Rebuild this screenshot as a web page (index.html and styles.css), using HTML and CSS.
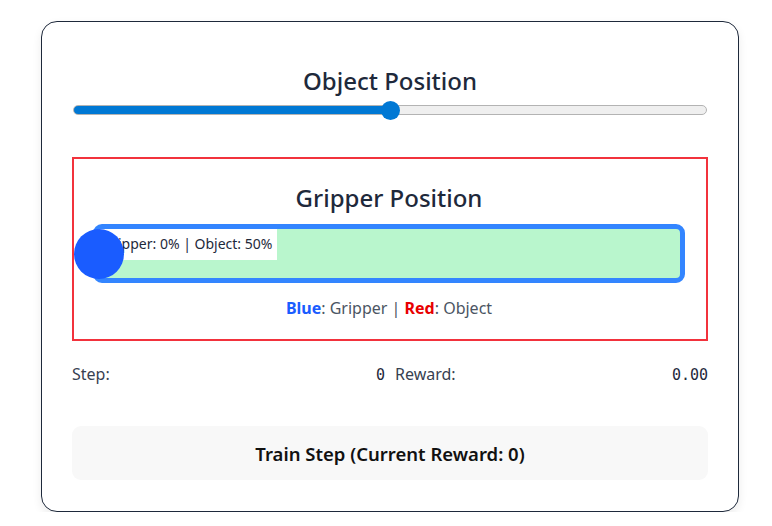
FILE: index.html
```html
<!DOCTYPE html>
<html lang="en">
<head>
<meta charset="utf-8">
<title>Gripper Trainer</title>
<link rel="stylesheet" href="styles.css">
</head>
<body>
  <div class="card">
    <section class="object-section">
      <h2 class="title">Object Position</h2>
      <input class="slider" type="range" min="0" max="100" value="50">
    </section>

    <section class="viz">
      <h2 class="title">Gripper Position</h2>
      <div class="bar">
        <div class="bar-label">Gripper: 0% | Object: 50%</div>
        <div class="gripper" style="left: 0%"></div>
      </div>
      <p class="legend"><b class="blue">Blue</b>: Gripper | <b class="red">Red</b>: Object</p>
    </section>

    <div class="stats">
      <div class="stat"><span class="stat-label">Step:</span><span class="stat-value">0</span></div>
      <div class="stat"><span class="stat-label">Reward:</span><span class="stat-value">0.00</span></div>
    </div>

    <button class="train">Train Step (Current Reward: 0)</button>
  </div>
</body>
</html>
```

FILE: styles.css
```css
* { box-sizing: border-box; }

html, body { background: #ffffff; }

body {
  margin: 0;
  padding: 21px 0 0 41px;
  font-family: "Noto Sans", "Open Sans", sans-serif;
  color: #1e293b;
}

.card {
  width: 698px;
  border: 1px solid #1e293b;
  border-radius: 16px;
  padding: 43px 30px 31px;
  box-shadow: 0 4px 10px rgba(0, 0, 0, 0.08);
  background: #fff;
}

.title {
  margin: 0;
  text-align: center;
  font-size: 24px;
  font-weight: 500;
  line-height: 32px;
  color: #1e293b;
}

.object-section .title { margin-bottom: 3px; }

.slider {
  -webkit-appearance: none;
  appearance: none;
  display: block;
  width: 634px;
  margin: 0 1px;
  height: 20px;
  background: transparent;
}
.slider::-webkit-slider-runnable-track {
  height: 10px;
  border-radius: 5px;
  border: 1px solid #b3b3b3;
  background: linear-gradient(to right, #0078d4 0 50%, #efefef 50% 100%);
}
.slider::-webkit-slider-thumb {
  -webkit-appearance: none;
  appearance: none;
  width: 19px;
  height: 19px;
  border-radius: 50%;
  background: #0078d4;
  margin-top: -5.5px;
  border: none;
}

.viz {
  margin-top: 37px;
  border: 2px solid #f2323c;
  padding: 23px 21px 19px 19px;
}

.viz .title { margin-bottom: 10px; }

.bar {
  position: relative;
  height: 59px;
  border: 5px solid #3385ff;
  border-radius: 9px;
  background: #b9f6cd;
}

.bar-label {
  position: absolute;
  top: 0;
  left: 0;
  background: #fff;
  padding: 4px 5px 5px 4px;
  font-size: 14px;
  line-height: 22px;
  color: #1e293b;
}

.gripper {
  position: absolute;
  top: 0;
  width: 50px;
  height: 50px;
  margin-left: -24px;
  border-radius: 50%;
  background: #1a5cff;
}

.legend {
  margin: 13px 0 0;
  text-align: center;
  font-size: 16px;
  line-height: 24px;
  color: #4b5563;
}
.legend b { font-weight: 700; }
.legend .blue { color: #1a5cff; }
.legend .red { color: #e80000; }

.stats {
  display: grid;
  grid-template-columns: 1fr 1fr;
  column-gap: 10px;
  margin-top: 21px;
}
.stat {
  display: flex;
  justify-content: space-between;
  align-items: baseline;
  line-height: 24px;
}
.stat-label { font-size: 16px; color: #374151; }
.stat-value {
  font-family: "DejaVu Sans Mono", "Liberation Mono", monospace;
  font-size: 15px;
  color: #1e293b;
}

.train {
  display: block;
  width: 100%;
  margin-top: 39px;
  height: 54px;
  border: none;
  border-radius: 9px;
  background: #f8f8f8;
  font-family: inherit;
  font-size: 18.5px;
  font-weight: 600;
  color: #111;
  cursor: pointer;
}
```
